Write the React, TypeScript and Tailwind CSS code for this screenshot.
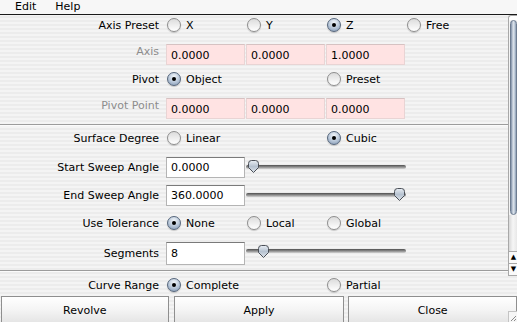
import React from 'react';

function Radio({ checked }: { checked?: boolean }) {
  return (
    <span
      className={`inline-flex w-[14px] h-[14px] shrink-0 rounded-full border items-center justify-center shadow-[0_1px_1px_rgba(0,0,0,0.18)] ${
        checked
          ? 'border-[#56667c] bg-[radial-gradient(circle_at_50%_30%,#f2f6fa_0%,#bccadb_50%,#8096b2_100%)]'
          : 'border-[#8e8e8e] bg-[linear-gradient(to_bottom,#dcdcdc,#ffffff)]'
      }`}
    >
      {checked && <span className="w-[4px] h-[4px] rounded-full bg-black" />}
    </span>
  );
}

function Option({ label, checked }: { label: string; checked?: boolean }) {
  return (
    <div className="w-[80px] flex items-center gap-[5px] pl-[1px]">
      <Radio checked={checked} />
      <span>{label}</span>
    </div>
  );
}

function Row({
  label,
  dim,
  labelUp,
  className,
  children,
}: {
  label: string;
  dim?: boolean;
  labelUp?: boolean;
  className: string;
  children: React.ReactNode;
}) {
  return (
    <div className={`flex items-center shrink-0 ${className}`}>
      <div
        className={`w-[160px] text-right pr-[1px] ${dim ? 'text-[#8c8c8c]' : 'text-black'} ${
          labelUp ? 'pb-[5px]' : ''
        }`}
      >
        {label}
      </div>
      <div className="flex items-center ml-[6px]">{children}</div>
    </div>
  );
}

function PinkField({ value }: { value: string }) {
  return (
    <div className="w-[79px] h-[21px] mr-[1px] flex items-center pl-[4px] pt-[2px] bg-[#ffe3e3] border border-[#e9d4d4] border-t-[#d6c2c2]">
      {value}
    </div>
  );
}

function WhiteField({ value, tall }: { value: string; tall?: boolean }) {
  return (
    <div
      className={`w-[79px] ${tall ? 'h-[23px]' : 'h-[21px]'} flex items-center pl-[4px] bg-white border border-[#b4b4b4] border-t-[#7a7a7a]`}
    >
      {value}
    </div>
  );
}

function Slider({ pos, up }: { pos: number; up?: boolean }) {
  return (
    <div className="relative w-[160px] h-[18px] ml-[1px]">
      <div
        className={`absolute left-0 right-[0px] ${up ? 'top-[4px]' : 'top-[6px]'} h-[4px] rounded-full bg-[linear-gradient(to_bottom,#4e4e4e,#9a9a9a_60%,#d4d4d4)]`}
      />
      <svg
        className={`absolute ${up ? 'top-[-1px]' : 'top-[0px]'}`}
        style={{ left: pos }}
        width="13"
        height="15"
        viewBox="0 0 13 15"
      >
        <defs>
          <linearGradient id="thumbg" x1="0" y1="0" x2="0" y2="1">
            <stop offset="0" stopColor="#e9eef4" />
            <stop offset="0.5" stopColor="#b6c2d0" />
            <stop offset="1" stopColor="#dfe5ec" />
          </linearGradient>
        </defs>
        <path
          d="M1.5 4.5 Q1.5 1.5 4.5 1.5 H8.5 Q11.5 1.5 11.5 4.5 V8.5 L6.5 13.5 L1.5 8.5 Z"
          fill="url(#thumbg)"
          stroke="#4a4f57"
          strokeWidth="1"
        />
      </svg>
    </div>
  );
}

function Separator({ className }: { className: string }) {
  return (
    <div className={`shrink-0 ${className}`}>
      <div className="h-[1px] bg-[#9c9c9c]" />
      <div className="h-[1px] bg-[#fbfbfb]" />
    </div>
  );
}

function Button({ label, className }: { label: string; className: string }) {
  return (
    <button
      className={`h-[27px] flex items-center justify-center border border-[#8f8f8f] border-b-0 bg-[linear-gradient(to_bottom,#ffffff,#f4f4f4_50%,#e4e4e4)] text-black ${className}`}
    >
      {label}
    </button>
  );
}

export default function App() {
  return (
    <div className="relative w-[517px] h-[322px] overflow-hidden text-[11px] leading-none text-black bg-[repeating-linear-gradient(to_bottom,#ececec_0px,#ececec_2px,#f4f4f4_2px,#f4f4f4_4px)] [font-family:'DejaVu_Sans',sans-serif]">
      {/* menu bar */}
      <div className="h-[15px] flex items-center gap-[19px] pl-[15px] pb-[1px] bg-[#f7f7f7] border-b border-[#1a1a1a]">
        <span>Edit</span>
        <span>Help</span>
      </div>

      <div className="flex h-[281px]">
        {/* options */}
        <div className="w-[508px] h-[281px] overflow-hidden flex flex-col">
          <Row label="Axis Preset" className="h-[20px]">
            <Option label="X" />
            <Option label="Y" />
            <Option label="Z" checked />
            <Option label="Free" />
          </Row>
          <Row label="Axis" dim labelUp className="h-[22px] mt-[8px]">
            <PinkField value="0.0000" />
            <PinkField value="0.0000" />
            <PinkField value="1.0000" />
          </Row>
          <Row label="Pivot" className="h-[20px] mt-[4px]">
            <div className="w-[160px]">
              <Option label="Object" checked />
            </div>
            <Option label="Preset" />
          </Row>
          <Row label="Pivot Point" dim labelUp className="h-[22px] mt-[8px]">
            <PinkField value="0.0000" />
            <PinkField value="0.0000" />
            <PinkField value="0.0000" />
          </Row>
          <Separator className="mt-[5px]" />
          <Row label="Surface Degree" className="h-[20px] mt-[2px]">
            <div className="w-[160px]">
              <Option label="Linear" />
            </div>
            <Option label="Cubic" checked />
          </Row>
          <Row label="Start Sweep Angle" className="h-[21px] mt-[9px]">
            <WhiteField value="0.0000" />
            <Slider pos={1} />
          </Row>
          <Row label="End Sweep Angle" className="h-[21px] mt-[7px]">
            <WhiteField value="360.0000" />
            <Slider pos={147} />
          </Row>
          <Row label="Use Tolerance" className="h-[20px] mt-[7px]">
            <Option label="None" checked />
            <Option label="Local" />
            <Option label="Global" />
          </Row>
          <Row label="Segments" className="h-[23px] mt-[9px]">
            <WhiteField value="8" tall />
            <Slider pos={11} up />
          </Row>
          <Separator className="mt-[5px]" />
          <Row label="Curve Range" className="h-[20px] mt-[3px]">
            <div className="w-[160px]">
              <Option label="Complete" checked />
            </div>
            <Option label="Partial" />
          </Row>
        </div>

        {/* scrollbar */}
        <div className="w-[9px] flex flex-col">
          <div className="h-[5px] bg-white border-l border-t border-[#a8a8a8] rounded-tl-[3px]" />
          <div className="h-[195px] border-l border-[#a8a8a8] bg-[#f4f4f4]">
            <div className="h-full ml-[1px] rounded-t-[4px] rounded-b-[4px] border border-[#6d7c90] bg-[linear-gradient(to_right,#7d8ea6,#dde4ec_45%,#c2cedb_70%,#8c9db4)]" />
          </div>
          <div className="h-[36px] border-l border-[#a8a8a8] bg-[linear-gradient(to_right,#d8d8d8,#f6f6f6_50%,#e8e8e8)]" />
          <div className="h-[12px] border-l border-t border-[#a8a8a8] bg-[#fafafa] flex items-center justify-center text-[7px] pl-[1px]">
            ▲
          </div>
          <div className="h-[13px] border-l border-t border-b border-[#a8a8a8] bg-[#fafafa] flex items-center justify-center text-[7px] pl-[1px]">
            ▼
          </div>
        </div>
      </div>

      {/* buttons */}
      <div className="flex h-[26px] pl-[1px]">
        <Button label="Revolve" className="w-[168px]" />
        <Button label="Apply" className="w-[171px] ml-[5px]" />
        <Button label="Close" className="w-[169px] ml-[4px]" />
      </div>

      {/* resize grip */}
      <div className="absolute right-0 bottom-0 w-[9px] h-[11px] bg-[#f6f6f6] border-l border-t border-[#c4c4c4]">
        <svg width="8" height="10" viewBox="0 0 8 10" className="absolute right-0 bottom-0">
          <path d="M7 4 L2 9 M7 7 L5 9" stroke="#8a8a8a" strokeWidth="1" />
        </svg>
      </div>
    </div>
  );
}
